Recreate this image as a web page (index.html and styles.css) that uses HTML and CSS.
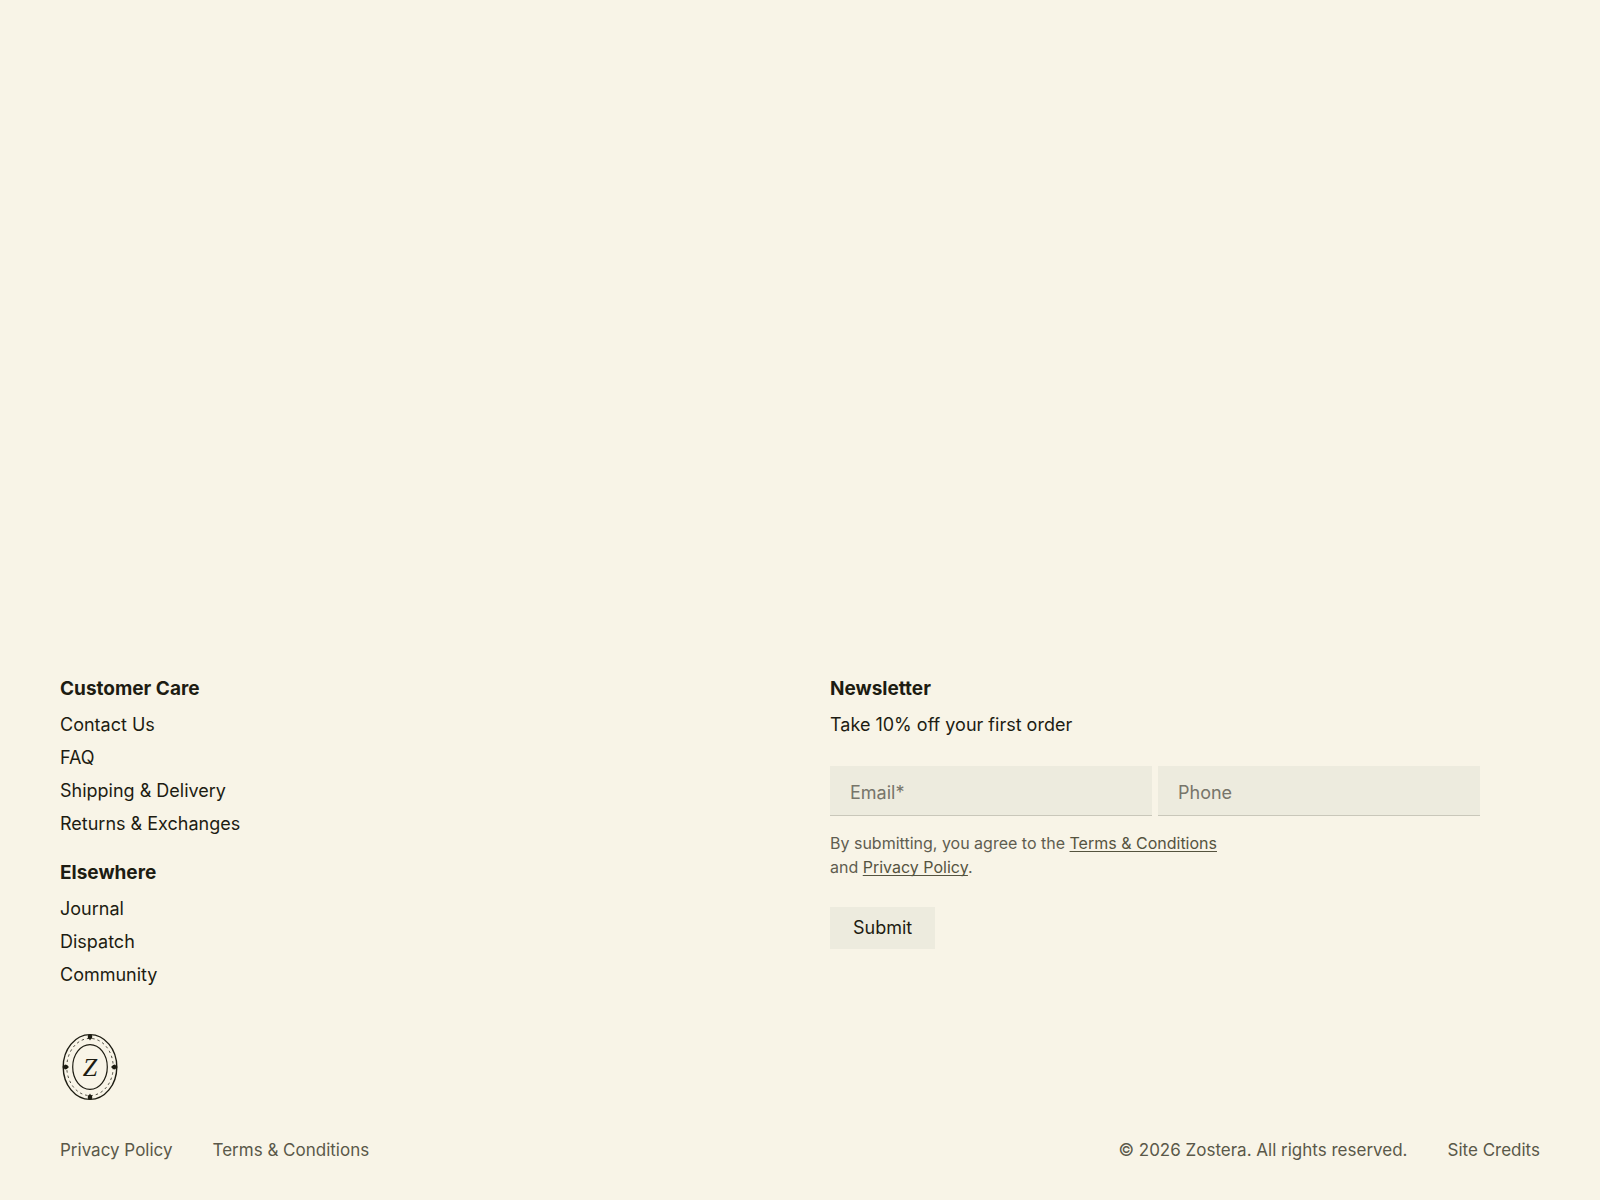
FILE: index.html
```html
<!DOCTYPE html>
<html lang="en">
<head>
  <meta charset="UTF-8" />
  <meta name="viewport" content="width=device-width, initial-scale=1" />
  <title>Zostera</title>
  <link rel="stylesheet" href="styles.css">
</head>
<body>

  <footer class="footer">
    <div class="footer-main">
      <div class="footer-nav">
        <nav class="nav-group" aria-labelledby="care">
          <h2 class="heading" id="care">Customer Care</h2>
          <ul class="nav-list">
            <li><a href="#">Contact Us</a></li>
            <li><a href="#">FAQ</a></li>
            <li><a href="#">Shipping &amp; Delivery</a></li>
            <li><a href="#">Returns &amp; Exchanges</a></li>
          </ul>
        </nav>
        <nav class="nav-group" aria-labelledby="elsewhere">
          <h2 class="heading" id="elsewhere">Elsewhere</h2>
          <ul class="nav-list">
            <li><a href="#">Journal</a></li>
            <li><a href="#">Dispatch</a></li>
            <li><a href="#">Community</a></li>
          </ul>
        </nav>
      </div>

      <div class="newsletter">
        <h2 class="heading">Newsletter</h2>
        <p class="intro">Take 10% off your first order</p>
        <form class="form">
          <div class="fields">
            <input class="field" type="email" placeholder="Email*" aria-label="Email" required>
            <input class="field" type="tel" placeholder="Phone" aria-label="Phone">
          </div>
          <p class="terms">By submitting, you agree to the <a href="#">Terms &amp; Conditions</a> and <a href="#">Privacy Policy</a>.</p>
          <button class="submit" type="submit">Submit</button>
        </form>
      </div>
    </div>

    <a class="seal" href="#" aria-label="Home">
      <svg width="60" height="68" viewBox="0 0 60 68" fill="none" stroke="currentColor">
        <ellipse cx="30" cy="34" rx="26.8" ry="32.4" stroke-width="1.4" />
        <ellipse cx="30" cy="34" rx="23.2" ry="28.6" stroke-width="0.8" stroke-dasharray="2.4 3" />
        <ellipse cx="30" cy="34" rx="17.3" ry="22.4" stroke-width="1.2" />
        <g fill="currentColor" stroke="none">
          <path d="M28.2 1.8h3.6l.5 2.2-.6 1.7-1 .5-.7 1.2-.7-1.2-1-.5-.6-1.7z" />
          <path d="M28.2 66.2h3.6l.5-2.2-.6-1.7-1-.5-.7-1.2-.7 1.2-1 .5-.6 1.7z" />
          <path d="M2.4 34l1.4-1.2 1.2-1.4 1.9.6 1 1.1 1.1.9-1.1.9-1 1.1-1.9.6-1.2-1.4z" />
          <path d="M57.6 34l-1.4-1.2-1.2-1.4-1.9.6-1 1.1-1.1.9 1.1.9 1 1.1 1.9.6 1.2-1.4z" />
        </g>
        <text class="seal-letter" x="30" y="43" text-anchor="middle">Z</text>
      </svg>
    </a>

    <div class="footer-bottom">
      <div class="bottom-links">
        <a href="#">Privacy Policy</a>
        <a href="#">Terms &amp; Conditions</a>
      </div>
      <div class="bottom-links">
        <span>© 2026 Zostera. All rights reserved.</span>
        <a href="#">Site Credits</a>
      </div>
    </div>
  </footer>

</body>
</html>
```
FILE: styles.css
```css
* {
  box-sizing: border-box;
}
body {
  margin: 0;
  min-height: 100vh;
  display: flex;
  flex-direction: column;
  justify-content: flex-end;
  font-family: Inter, "Liberation Sans", sans-serif;
  font-size: 18px;
  line-height: 25px;
  background: #f8f4e7;
  color: #1d1c12;
}
h2, p, ul {
  margin: 0;
  padding: 0;
}
a {
  color: inherit;
  text-decoration: none;
}
.footer {
  padding: 0 60px 38px;
}
.footer-main {
  display: grid;
  grid-template-columns: 1fr 1fr;
  gap: 60px;
}
.footer-nav {
  display: flex;
  flex-direction: column;
  gap: 24px;
}
.heading {
  margin-bottom: 11px;
  font-size: 19px;
  font-weight: 700;
}
.nav-list {
  display: flex;
  flex-direction: column;
  gap: 8px;
  list-style: none;
}

/* Newsletter */
.newsletter {
  padding-right: 60px;
}
.form {
  margin-top: 29px;
}
.fields {
  display: grid;
  grid-template-columns: 1fr 1fr;
  gap: 6px;
}
.field {
  width: 100%;
  height: 50px;
  padding: 4px 20px 0;
  border: 0;
  border-bottom: 1px solid #c9c7ba;
  border-radius: 0;
  background: #edebde;
  color: inherit;
  font: inherit;
}
.field::placeholder {
  color: #77756a;
  opacity: 1;
}
.terms {
  max-width: 400px;
  margin-top: 15px;
  font-size: 16px;
  line-height: 24px;
  color: #5f5d50;
}
.terms a {
  color: #55533f;
  text-decoration: underline 1px;
  text-decoration-skip-ink: none;
  text-underline-offset: 2px;
}
.submit {
  height: 42px;
  margin-top: 28px;
  padding: 0 23px 2px;
  border: 0;
  background: #edebde;
  color: inherit;
  font: inherit;
  cursor: pointer;
}

/* Seal */
.seal {
  display: inline-block;
  margin-top: 46px;
}
.seal svg {
  display: block;
}
.seal-letter {
  font-family: "Liberation Serif", serif;
  font-size: 26px;
  font-style: italic;
  fill: currentColor;
  stroke: none;
}

.footer-bottom {
  display: flex;
  justify-content: space-between;
  margin-top: 31px;
  font-size: 17px;
  line-height: 24px;
  color: #5a5849;
}
.bottom-links {
  display: flex;
  gap: 40px;
}
```
